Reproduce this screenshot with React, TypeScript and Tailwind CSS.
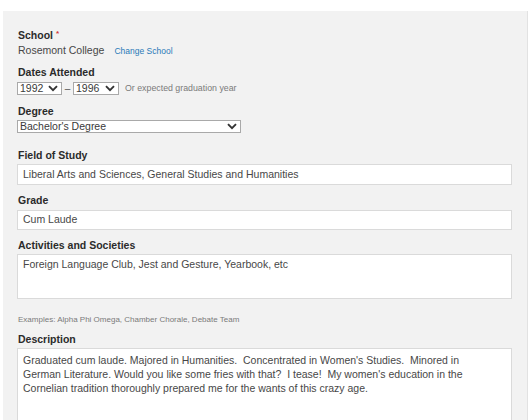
const Chevron = () => (
  <svg width="10" height="7" viewBox="0 0 10 7" className="shrink-0">
    <path d="M1 1.2 L5 5.2 L9 1.2" fill="none" stroke="#333" strokeWidth="1.9" />
  </svg>
);

function FakeSelect({ value, className }: { value: string; className: string }) {
  return (
    <div className={`flex items-center justify-between h-[13px] bg-white border border-[#a9a9a9] pl-[2px] pr-[3px] ${className}`}>
      <span className="text-[10.5px] leading-[11px] text-[#3a3a3a]">{value}</span>
      <Chevron />
    </div>
  );
}

function Label({ children, className = "" }: { children: React.ReactNode; className?: string }) {
  return <div className={`text-[10.5px] leading-[13px] font-bold text-[#2b2b2b] pl-[1px] ${className}`}>{children}</div>;
}

export default function App() {
  return (
    <div className="w-[529px] h-[420px] overflow-hidden bg-white pt-[11px] pl-[3px] pr-[1px]" style={{ fontFamily: '"Liberation Sans", Arial, sans-serif' }}>
      <div className="h-[409px] bg-[#f2f2f2] border-r border-[#e2e2e2] pl-[14px] pr-[15px] pt-[18px]">
        <Label>
          School <span className="align-top text-[8px] leading-[10px] text-[#d23a3a]">*</span>
        </Label>
        <div className="mt-[2px] flex items-baseline gap-[10px] pl-[1px] leading-[13px]">
          <span className="text-[10.5px] text-[#474747]">Rosemont College</span>
          <span className="text-[8.5px] text-[#2a7ab8]">Change School</span>
        </div>

        <Label className="mt-[8px]">Dates Attended</Label>
        <div className="mt-[3px] flex items-center">
          <FakeSelect value="1992" className="w-[45px]" />
          <span className="w-[11px] text-center text-[10px] leading-[13px] text-[#555]">–</span>
          <FakeSelect value="1996" className="w-[46px]" />
          <span className="ml-[6px] text-[8.8px] text-[#7a7a7a]">Or expected graduation year</span>
        </div>

        <Label className="mt-[10px]">Degree</Label>
        <FakeSelect value="Bachelor's Degree" className="mt-[2px] w-[224px]" />

        <Label className="mt-[16px]">Field of Study</Label>
        <div className="mt-[2px] h-[21px] bg-white border border-[#dadada] pl-[5px] flex items-center text-[10.5px] text-[#474747]">
          Liberal Arts and Sciences, General Studies and Humanities
        </div>

        <Label className="mt-[9px]">Grade</Label>
        <div className="mt-[3px] h-[20px] bg-white border border-[#dadada] pl-[5px] flex items-center text-[10.5px] text-[#474747]">
          Cum Laude
        </div>

        <Label className="mt-[9px]">Activities and Societies</Label>
        <div className="mt-[2px] h-[45px] bg-white border border-[#dadada] pl-[5px] pt-[2px] text-[10.5px] leading-[14px] text-[#474747]">
          Foreign Language Club, Jest and Gesture, Yearbook, etc
        </div>

        <div className="mt-[16px] pl-[1px] text-[8px] leading-[10px] text-[#7a7a7a]">
          Examples: Alpha Phi Omega, Chamber Chorale, Debate Team
        </div>

        <Label className="mt-[8px]">Description</Label>
        <div className="mt-[2px] h-[90px] bg-white border border-[#dadada] pl-[5px] pr-[20px] pt-[4px] text-[10.5px] leading-[14px] text-[#474747] whitespace-pre-wrap">
          {"Graduated cum laude. Majored in Humanities.  Concentrated in Women's Studies.  Minored in\nGerman Literature. Would you like some fries with that?  I tease!  My women's education in the\nCornelian tradition thoroughly prepared me for the wants of this crazy age."}
        </div>
      </div>
    </div>
  );
}
